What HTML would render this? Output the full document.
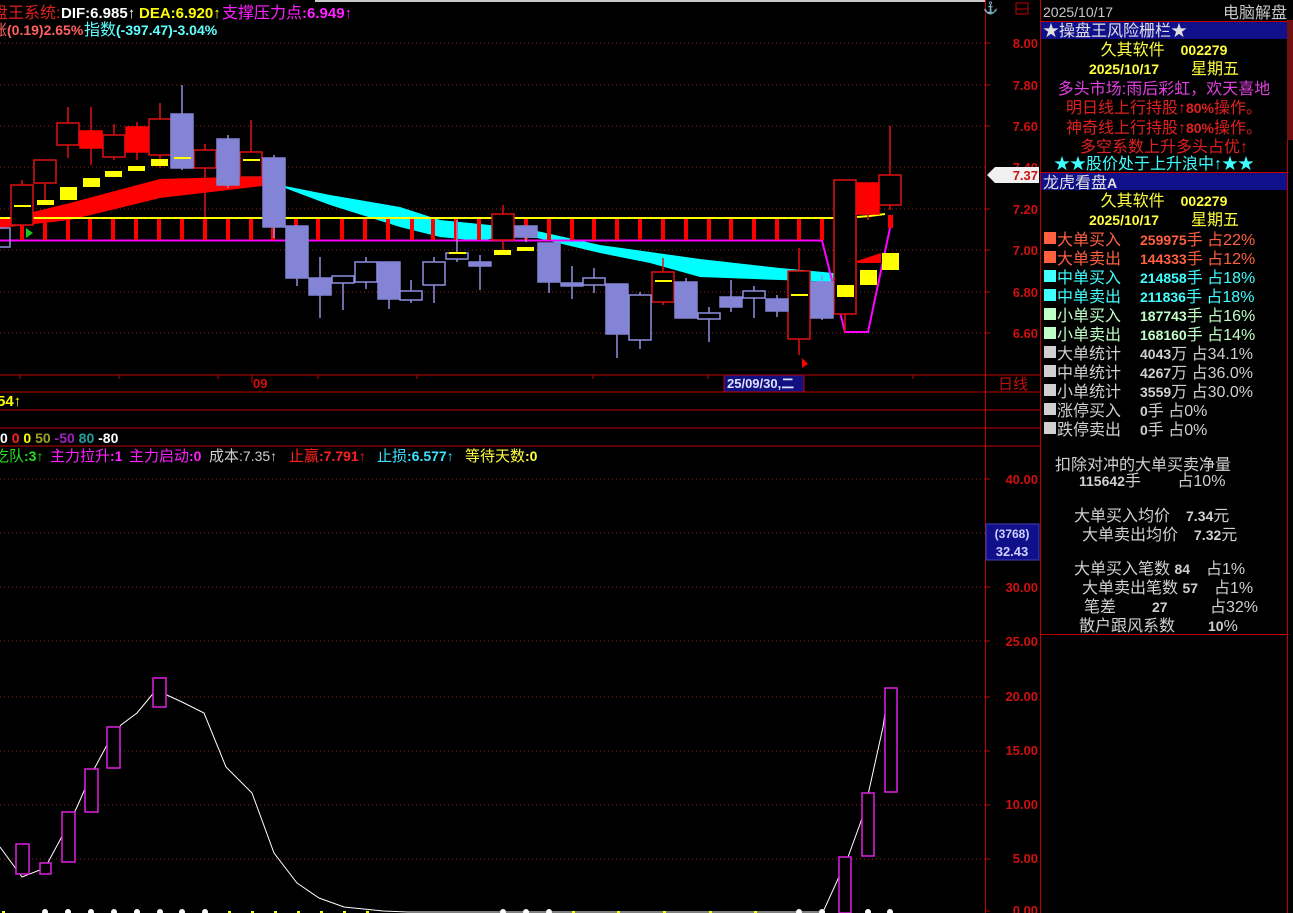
<!DOCTYPE html>
<html><head><meta charset="utf-8"><style>
html,body{margin:0;padding:0;background:#000;width:1293px;height:913px;overflow:hidden}
svg{display:block}
text{font-family:"Liberation Sans","Noto Sans CJK SC",sans-serif}
.ax{fill:#d01010;font-size:13px;font-weight:bold;text-anchor:end}
.n{font-size:14px;font-weight:bold}
</style></head><body>
<svg width="1293" height="913" viewBox="0 0 1293 913" xmlns="http://www.w3.org/2000/svg">
<rect width="1293" height="913" fill="#000"/>
<rect x="315" y="0" width="670" height="2" fill="#c8c8c8"/>
<g stroke="#8a2a20" stroke-dasharray="1,3" stroke-width="1">
<line x1="0" y1="43" x2="985" y2="43"/><line x1="0" y1="85" x2="985" y2="85"/>
<line x1="0" y1="126" x2="985" y2="126"/><line x1="0" y1="167" x2="985" y2="167"/>
<line x1="0" y1="209" x2="985" y2="209"/><line x1="0" y1="250" x2="985" y2="250"/>
<line x1="0" y1="292" x2="985" y2="292"/><line x1="0" y1="333" x2="985" y2="333"/>
<line x1="0" y1="479" x2="985" y2="479"/><line x1="0" y1="533" x2="985" y2="533"/>
<line x1="0" y1="587" x2="985" y2="587"/><line x1="0" y1="641" x2="985" y2="641"/>
<line x1="0" y1="697" x2="985" y2="697"/><line x1="0" y1="751" x2="985" y2="751"/>
<line x1="0" y1="805" x2="985" y2="805"/><line x1="0" y1="859" x2="985" y2="859"/>
</g>
<g stroke="#c00000" stroke-width="1">
<line x1="0" y1="375" x2="1040" y2="375"/><line x1="0" y1="392" x2="1040" y2="392"/>
<line x1="0" y1="410" x2="1040" y2="410"/><line x1="0" y1="428" x2="1040" y2="428"/>
<line x1="0" y1="446" x2="1040" y2="446"/>
<line x1="985.5" y1="0" x2="985.5" y2="913"/><line x1="1040.5" y1="0" x2="1040.5" y2="913"/>
<line x1="1287.5" y1="20" x2="1287.5" y2="913"/>
<line x1="20" y1="375" x2="20" y2="379"/><line x1="119" y1="375" x2="119" y2="379"/><line x1="218" y1="375" x2="218" y2="379"/><line x1="252" y1="375" x2="252" y2="383"/><line x1="318" y1="375" x2="318" y2="379"/><line x1="417" y1="375" x2="417" y2="379"/><line x1="593" y1="375" x2="593" y2="379"/><line x1="708" y1="375" x2="708" y2="379"/><line x1="913" y1="375" x2="913" y2="379"/>
</g>
<g stroke="#c00000"><line x1="985" y1="43" x2="990" y2="43"/><line x1="985" y1="85" x2="990" y2="85"/><line x1="985" y1="126" x2="990" y2="126"/><line x1="985" y1="209" x2="990" y2="209"/><line x1="985" y1="250" x2="990" y2="250"/><line x1="985" y1="292" x2="990" y2="292"/><line x1="985" y1="333" x2="990" y2="333"/>
<line x1="985" y1="479" x2="990" y2="479"/><line x1="985" y1="587" x2="990" y2="587"/><line x1="985" y1="641" x2="990" y2="641"/><line x1="985" y1="697" x2="990" y2="697"/><line x1="985" y1="751" x2="990" y2="751"/><line x1="985" y1="805" x2="990" y2="805"/><line x1="985" y1="859" x2="990" y2="859"/><line x1="985" y1="911" x2="990" y2="911"/></g>

<polygon fill="#ff0000" points="0,220 70,203 160,179 262,176 285,186 285,188 262,186 160,198 70,220 0,228"/>
<polygon fill="#00ffff" points="285,186 330,195 400,207 440,220 500,226 537,231 600,245 650,252 700,259 780,268 834,273 834,282 780,280 700,277 650,263 600,253 537,238 500,237 480,241 440,237 400,227 330,205 285,188"/>
<polygon fill="#ff0000" points="857,261 881,253 881,263 857,263"/>
<line x1="0" y1="218" x2="835" y2="218" stroke="#ffff00" stroke-width="2"/>
<polyline points="857,217 870,216 885,214" fill="none" stroke="#ffff00" stroke-width="2"/>
<polyline points="0,240.5 822,240.5 845,332 868,332 890,228" fill="none" stroke="#ff00ff" stroke-width="2"/>
<g fill="#ff0000">
<rect x="0" y="219" width="7" height="8"/>
<rect x="20" y="219" width="4" height="21"/><rect x="43" y="219" width="4" height="21"/><rect x="66" y="219" width="4" height="21"/><rect x="88" y="219" width="4" height="21"/><rect x="111" y="219" width="4" height="21"/><rect x="134" y="219" width="4" height="21"/><rect x="157" y="219" width="4" height="21"/><rect x="180" y="219" width="4" height="21"/><rect x="203" y="219" width="4" height="21"/><rect x="226" y="219" width="4" height="21"/><rect x="249" y="219" width="4" height="21"/><rect x="271" y="219" width="4" height="21"/><rect x="294" y="219" width="4" height="21"/><rect x="316" y="219" width="4" height="21"/><rect x="340" y="219" width="4" height="21"/><rect x="363" y="219" width="4" height="21"/><rect x="386" y="219" width="4" height="21"/><rect x="410" y="219" width="4" height="21"/><rect x="431" y="219" width="4" height="21"/><rect x="454" y="219" width="4" height="21"/><rect x="477" y="219" width="4" height="21"/><rect x="524" y="219" width="4" height="21"/><rect x="547" y="219" width="4" height="21"/><rect x="570" y="219" width="4" height="21"/><rect x="592" y="219" width="4" height="21"/><rect x="615" y="219" width="4" height="21"/><rect x="638" y="219" width="4" height="21"/><rect x="661" y="219" width="4" height="21"/><rect x="684" y="219" width="4" height="21"/><rect x="707" y="219" width="4" height="21"/><rect x="729" y="219" width="4" height="21"/><rect x="752" y="219" width="4" height="21"/><rect x="775" y="219" width="4" height="21"/><rect x="797" y="219" width="4" height="21"/><rect x="820" y="219" width="4" height="21"/>
<rect x="888" y="215" width="5" height="13"/>
</g>

<g stroke-width="1.5">
<g stroke="#9090e0" fill="none"><rect x="-12" y="228" width="22" height="19"/></g>
<g stroke="#e01010" fill="#000">
<line x1="22" y1="180" x2="22" y2="230"/><rect x="11" y="185" width="22" height="40"/>
<line x1="45" y1="183" x2="45" y2="200"/><rect x="34" y="160" width="22" height="23"/>
<line x1="68" y1="107" x2="68" y2="158"/><rect x="57" y="123" width="22" height="22"/>
<line x1="91" y1="107" x2="91" y2="165"/>
<line x1="114" y1="124" x2="114" y2="160"/><rect x="103" y="135" width="22" height="22"/>
<line x1="137" y1="122" x2="137" y2="160"/>
<line x1="160" y1="103" x2="160" y2="168"/><rect x="149" y="119" width="22" height="36"/>
<line x1="205" y1="144" x2="205" y2="217"/><rect x="194" y="150" width="22" height="18"/>
<line x1="251" y1="120" x2="251" y2="180"/><rect x="240" y="152" width="22" height="25"/>
<line x1="503" y1="205" x2="503" y2="252"/><rect x="492" y="214" width="22" height="26"/>
<line x1="663" y1="258" x2="663" y2="305"/><rect x="652" y="272" width="22" height="30"/>
<line x1="799" y1="248" x2="799" y2="355"/><rect x="788" y="271" width="22" height="68"/>
<line x1="845" y1="314" x2="845" y2="332"/><rect x="834" y="180" width="22" height="134"/>
<line x1="868" y1="214" x2="868" y2="220"/>
<line x1="890" y1="126" x2="890" y2="210"/><rect x="879" y="175" width="22" height="30"/>
</g>
<g fill="#ff0000" stroke="#ff0000">
<rect x="80" y="131" width="22" height="17"/><rect x="126" y="127" width="22" height="25"/><rect x="857" y="183" width="22" height="31"/>
</g>
<g stroke="#9090e0">
<line x1="182" y1="85" x2="182" y2="170"/><line x1="228" y1="135" x2="228" y2="188"/><line x1="274" y1="155" x2="274" y2="238"/><line x1="297" y1="226" x2="297" y2="286"/><line x1="320" y1="257" x2="320" y2="318"/><line x1="343" y1="276" x2="343" y2="310"/><line x1="366" y1="257" x2="366" y2="289"/><line x1="389" y1="262" x2="389" y2="309"/><line x1="411" y1="280" x2="411" y2="303"/><line x1="434" y1="257" x2="434" y2="303"/><line x1="457" y1="220" x2="457" y2="262"/><line x1="480" y1="255" x2="480" y2="290"/><line x1="526" y1="226" x2="526" y2="242"/><line x1="549" y1="243" x2="549" y2="293"/><line x1="572" y1="266" x2="572" y2="299"/><line x1="594" y1="268" x2="594" y2="293"/><line x1="617" y1="284" x2="617" y2="358"/><line x1="640" y1="292" x2="640" y2="349"/><line x1="686" y1="278" x2="686" y2="318"/><line x1="709" y1="307" x2="709" y2="342"/><line x1="731" y1="280" x2="731" y2="312"/><line x1="754" y1="286" x2="754" y2="318"/><line x1="777" y1="295" x2="777" y2="317"/><line x1="822" y1="275" x2="822" y2="320"/>
</g>
<g fill="#8484d6" stroke="#8484d6">
<rect x="171" y="114" width="22" height="54"/><rect x="217" y="139" width="22" height="46"/><rect x="263" y="158" width="22" height="69"/><rect x="286" y="226" width="22" height="52"/><rect x="309" y="278" width="22" height="17"/><rect x="378" y="262" width="22" height="37"/><rect x="469" y="262" width="22" height="4"/><rect x="515" y="226" width="22" height="11"/><rect x="538" y="243" width="22" height="39"/><rect x="561" y="283" width="22" height="3"/><rect x="606" y="284" width="22" height="50"/><rect x="675" y="282" width="22" height="36"/><rect x="720" y="297" width="22" height="10"/><rect x="766" y="299" width="22" height="12"/><rect x="811" y="282" width="22" height="36"/>
</g>
<g fill="#000" stroke="#9090e0">
<rect x="332" y="276" width="22" height="7"/><rect x="355" y="262" width="22" height="20"/><rect x="400" y="291" width="22" height="9"/><rect x="423" y="262" width="22" height="23"/><rect x="446" y="253" width="22" height="6"/><rect x="583" y="278" width="22" height="7"/><rect x="629" y="295" width="22" height="45"/><rect x="698" y="313" width="22" height="6"/><rect x="743" y="291" width="22" height="7"/>
</g>
</g>
<g fill="#ffff00">
<rect x="37" y="200" width="17" height="5"/><rect x="60" y="187" width="17" height="13"/><rect x="83" y="178" width="17" height="9"/><rect x="105" y="171" width="17" height="6"/><rect x="128" y="166" width="17" height="5"/><rect x="151" y="159" width="17" height="7"/>
<rect x="14" y="205" width="17" height="2"/><rect x="174" y="157" width="17" height="2"/><rect x="243" y="159" width="17" height="2"/><rect x="449" y="252" width="17" height="2"/><rect x="655" y="280" width="17" height="2"/><rect x="791" y="294" width="17" height="2"/>
<rect x="494" y="250" width="17" height="5"/><rect x="517" y="247" width="17" height="4"/>
<rect x="837" y="285" width="17" height="12"/><rect x="860" y="270" width="17" height="15"/><rect x="882" y="253" width="17" height="17"/>
</g>
<polygon points="26,228 26,238 33,233" fill="#20c020"/>
<polygon points="802,358 802,368 808,364" fill="#ff0000"/>

<g font-size="15" font-weight="bold">
<text x="-8" y="18" fill="#e02020" font-weight="normal" font-size="16">盘王系统:</text>
<text x="61" y="18" fill="#ffffff">DIF:6.985↑</text>
<text x="139" y="18" fill="#ffff00">DEA:6.920↑</text>
<text x="222" y="18" fill="#ff20ff"><tspan font-weight="normal" font-size="16">支撑压力点</tspan>:6.949↑</text>
<text x="-8" y="35" fill="#ff6060" font-size="14"><tspan font-weight="normal" font-size="15">涨</tspan>(0.19)2.65%</text>
<text x="84" y="35" fill="#60ffff" font-size="14"><tspan font-weight="normal" font-size="16">指数</tspan>(-397.47)-3.04%</text>
<text x="-3" y="406" fill="#ffff00">54↑</text>
<text x="0" y="443" fill="#fff" font-size="14">0 <tspan fill="#ff2020">0</tspan> <tspan fill="#ffff00">0</tspan> <tspan fill="#a0a020">50</tspan> <tspan fill="#a020c0">-50</tspan> <tspan fill="#20a0a0">80</tspan> -80</text>
</g>
<g font-size="14" font-weight="bold">
<text x="-6" y="461" fill="#20e020"><tspan font-weight="normal" font-size="15">吃队</tspan>:3↑</text>
<text x="50" y="461" fill="#ff20ff"><tspan font-weight="normal" font-size="15">主力拉升</tspan>:1</text>
<text x="129" y="461" fill="#ff20ff"><tspan font-weight="normal" font-size="15">主力启动</tspan>:0</text>
<text x="209" y="461" fill="#d0d0d0" font-weight="normal"><tspan font-size="15">成本</tspan>:7.35↑</text>
<text x="289" y="461" fill="#ff2020"><tspan font-weight="normal" font-size="15">止赢</tspan>:7.791↑</text>
<text x="377" y="461" fill="#40e0ff"><tspan font-weight="normal" font-size="15">止损</tspan>:6.577↑</text>
<text x="465" y="461" fill="#ffff40"><tspan font-weight="normal" font-size="15">等待天数</tspan>:0</text>
</g>
<text x="253" y="388" fill="#d01010" font-size="13" font-weight="bold">09</text>
<rect x="724" y="375" width="80" height="17" fill="#101080" stroke="#c00000"/>
<text x="727" y="388" fill="#e0e0ff" font-size="13" font-weight="bold">25/09/30,二</text>
<text x="998" y="389" fill="#c01010" font-size="15">日线</text>

<text class="ax" x="1038" y="48">8.00</text><text class="ax" x="1038" y="90">7.80</text><text class="ax" x="1038" y="131">7.60</text><text class="ax" x="1038" y="172">7.40</text><text class="ax" x="1038" y="214">7.20</text><text class="ax" x="1038" y="255">7.00</text><text class="ax" x="1038" y="297">6.80</text><text class="ax" x="1038" y="338">6.60</text>
<polygon points="987,175 995,167 1039,167 1039,183 995,183" fill="#f0f0f0"/>
<text class="ax" x="1038" y="180" fill="#e00000">7.37</text>
<text x="983" y="12" fill="#ffff00" font-size="12" font-weight="bold">⚓</text>
<rect x="1016" y="3" width="12" height="11" fill="none" stroke="#c00000"/><line x1="1016" y1="9" x2="1028" y2="9" stroke="#c00000"/>
<text class="ax" x="1038" y="484">40.00</text><text class="ax" x="1038" y="592">30.00</text><text class="ax" x="1038" y="646">25.00</text><text class="ax" x="1038" y="701">20.00</text><text class="ax" x="1038" y="755">15.00</text><text class="ax" x="1038" y="809">10.00</text><text class="ax" x="1038" y="863">5.00</text><text class="ax" x="1038" y="915">0.00</text>
<rect x="986" y="524" width="53" height="36" fill="#10108a" stroke="#4040c0"/>
<text x="1012" y="538" fill="#d0d0ff" font-size="12" font-weight="bold" text-anchor="middle">(3768)</text>
<text x="1012" y="556" fill="#d0d0ff" font-size="13" font-weight="bold" text-anchor="middle">32.43</text>

<polyline fill="none" stroke="#ffffff" stroke-width="1" points="0,847 22,877 45,868 67,827 77,807 92,773 108,743 121,725 137,713 156,690 182,702 204,713 226,767 252,793 274,853 297,883 319,898 344,907 383,911 408,912 823,912 848,857 864,813 883,727 887,700"/>
<g fill="#000" stroke="#e020e0" stroke-width="1.5">
<rect x="16" y="844" width="13" height="30"/><rect x="40" y="863" width="11" height="11"/><rect x="62" y="812" width="13" height="50"/><rect x="85" y="769" width="13" height="43"/><rect x="107" y="727" width="13" height="41"/><rect x="153" y="678" width="13" height="29"/><rect x="839" y="857" width="12" height="56"/><rect x="862" y="793" width="12" height="63"/><rect x="885" y="688" width="12" height="104"/>
</g>
<g fill="#ffffff"><circle cx="45" cy="912" r="3"/><circle cx="68" cy="912" r="3"/><circle cx="91" cy="912" r="3"/><circle cx="114" cy="912" r="3"/><circle cx="137" cy="912" r="3"/><circle cx="160" cy="912" r="3"/><circle cx="182" cy="912" r="3"/><circle cx="205" cy="912" r="3"/><circle cx="503" cy="912" r="3"/><circle cx="526" cy="912" r="3"/><circle cx="549" cy="912" r="3"/><circle cx="799" cy="912" r="3"/><circle cx="822" cy="912" r="3"/><circle cx="868" cy="912" r="3"/><circle cx="890" cy="912" r="3"/></g>
<g fill="#ffff00"><rect x="2" y="911" width="3" height="2"/><rect x="228" y="911" width="3" height="2"/><rect x="251" y="911" width="3" height="2"/><rect x="274" y="911" width="3" height="2"/><rect x="297" y="911" width="3" height="2"/><rect x="320" y="911" width="3" height="2"/><rect x="343" y="911" width="3" height="2"/><rect x="366" y="911" width="3" height="2"/><rect x="572" y="911" width="3" height="2"/><rect x="617" y="911" width="3" height="2"/><rect x="663" y="911" width="3" height="2"/><rect x="709" y="911" width="3" height="2"/><rect x="754" y="911" width="3" height="2"/></g>

<text x="1043" y="17" fill="#c8c8c8" font-size="14">2025/10/17</text>
<text x="1287" y="18" fill="#c8c8c8" font-size="16" text-anchor="end">电脑解盘</text>
<rect x="1287" y="20" width="6" height="120" fill="#701010"/>
<line x1="1041" y1="21.5" x2="1287" y2="21.5" stroke="#c00000"/>
<rect x="1041" y="22" width="246" height="17" fill="#10108a"/>
<text x="1043" y="36" fill="#e0e0e0" font-size="16">★操盘王风险栅栏★</text>
<g text-anchor="middle" font-size="16">
<text x="1164" y="55" fill="#ffff40">久其软件　<tspan class="n">002279</tspan></text>
<text x="1164" y="74" fill="#ffff40"><tspan class="n">2025/10/17</tspan>　　星期五</text>
<text x="1164" y="94" fill="#e040e0">多头市场:雨后彩虹，欢天喜地</text>
<text x="1164" y="113" fill="#e02020">明日线上行持股↑<tspan class="n">80%</tspan>操作。</text>
<text x="1164" y="133" fill="#e02020">神奇线上行持股↑<tspan class="n">80%</tspan>操作。</text>
<text x="1164" y="152" fill="#e02020">多空系数上升多头占优↑</text>
<text x="1154" y="169" fill="#40ffff">★★股价处于上升浪中↑★★</text>
</g>
<line x1="1041" y1="172.5" x2="1287" y2="172.5" stroke="#c00000"/>
<rect x="1041" y="173" width="246" height="17" fill="#10108a"/>
<text x="1043" y="188" fill="#e0e0e0" font-size="16">龙虎看盘<tspan font-weight="bold" font-size="14">A</tspan></text>
<g text-anchor="middle" font-size="16">
<text x="1164" y="206" fill="#ffff40">久其软件　<tspan class="n">002279</tspan></text>
<text x="1164" y="225" fill="#ffff40"><tspan class="n">2025/10/17</tspan>　　星期五</text>
</g>
<g font-size="16">
<g fill="#ff6040"><rect x="1044" y="232" width="12" height="12"/><text x="1057" y="245">大单买入</text><text x="1140" y="245"><tspan class="n">259975</tspan>手 占22%</text>
<rect x="1044" y="251" width="12" height="12"/><text x="1057" y="264">大单卖出</text><text x="1140" y="264"><tspan class="n">144333</tspan>手 占12%</text></g>
<g fill="#40ffff"><rect x="1044" y="270" width="12" height="12"/><text x="1057" y="283">中单买入</text><text x="1140" y="283"><tspan class="n">214858</tspan>手 占18%</text>
<rect x="1044" y="289" width="12" height="12"/><text x="1057" y="302">中单卖出</text><text x="1140" y="302"><tspan class="n">211836</tspan>手 占18%</text></g>
<g fill="#c0ffc8"><rect x="1044" y="308" width="12" height="12"/><text x="1057" y="321">小单买入</text><text x="1140" y="321"><tspan class="n">187743</tspan>手 占16%</text>
<rect x="1044" y="327" width="12" height="12"/><text x="1057" y="340">小单卖出</text><text x="1140" y="340"><tspan class="n">168160</tspan>手 占14%</text></g>
<g fill="#d0d0d0">
<rect x="1044" y="346" width="12" height="12"/><text x="1057" y="359">大单统计</text><text x="1140" y="359"><tspan class="n">4043</tspan>万 占34.1%</text>
<rect x="1044" y="365" width="12" height="12"/><text x="1057" y="378">中单统计</text><text x="1140" y="378"><tspan class="n">4267</tspan>万 占36.0%</text>
<rect x="1044" y="384" width="12" height="12"/><text x="1057" y="397">小单统计</text><text x="1140" y="397"><tspan class="n">3559</tspan>万 占30.0%</text>
<rect x="1044" y="403" width="12" height="12"/><text x="1057" y="416">涨停买入</text><text x="1140" y="416"><tspan class="n">0</tspan>手 占0%</text>
<rect x="1044" y="422" width="12" height="12"/><text x="1057" y="435">跌停卖出</text><text x="1140" y="435"><tspan class="n">0</tspan>手 占0%</text>
<text x="1055" y="470">扣除对冲的大单买卖净量</text>
<text x="1079" y="486"><tspan class="n">115642</tspan>手　　 占10%</text>
<text x="1074" y="521">大单买入均价　<tspan class="n">7.34</tspan>元</text>
<text x="1082" y="540">大单卖出均价　<tspan class="n">7.32</tspan>元</text>
<text x="1074" y="574">大单买入笔数 <tspan class="n">84</tspan>　占1%</text>
<text x="1082" y="593">大单卖出笔数 <tspan class="n">57</tspan>　占1%</text>
<text x="1084" y="612">笔差</text><text x="1152" y="612" class="n">27</text><text x="1210" y="612">占32%</text>
<text x="1079" y="631">散户跟风系数</text><text x="1208" y="631"><tspan class="n">10</tspan>%</text>
</g>
</g>
<line x1="1041" y1="634.5" x2="1287" y2="634.5" stroke="#c00000"/>
</svg>
</body></html>
